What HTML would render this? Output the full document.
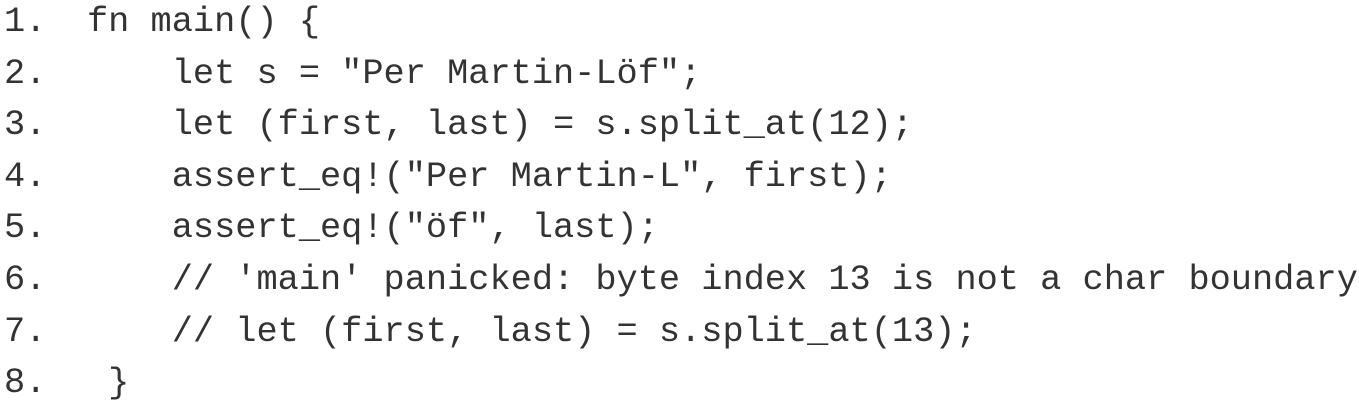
<!DOCTYPE html>
<html><head><style>
body{margin:0;background:#fff;width:1359px;height:401px;overflow:hidden}
.c{position:absolute;left:0;top:-3px;font-family:"Liberation Mono",monospace;font-size:35.3px;line-height:51.6px;color:#333}
.l{position:relative;height:51.6px}
.n{position:absolute;left:4px;white-space:pre}
.t{position:absolute;left:87px;white-space:pre}
</style></head><body>
<div class="c"><div class="l"><span class="n">1.</span><span class="t">fn main() {</span></div><div class="l"><span class="n">2.</span><span class="t">    let s = "Per Martin-Löf";</span></div><div class="l"><span class="n">3.</span><span class="t">    let (first, last) = s.split_at(12);</span></div><div class="l"><span class="n">4.</span><span class="t">    assert_eq!("Per Martin-L", first);</span></div><div class="l"><span class="n">5.</span><span class="t">    assert_eq!("öf", last);</span></div><div class="l"><span class="n">6.</span><span class="t">    // 'main' panicked: byte index 13 is not a char boundary</span></div><div class="l"><span class="n">7.</span><span class="t">    // let (first, last) = s.split_at(13);</span></div><div class="l"><span class="n">8.</span><span class="t"> }</span></div></div>
</body></html>
